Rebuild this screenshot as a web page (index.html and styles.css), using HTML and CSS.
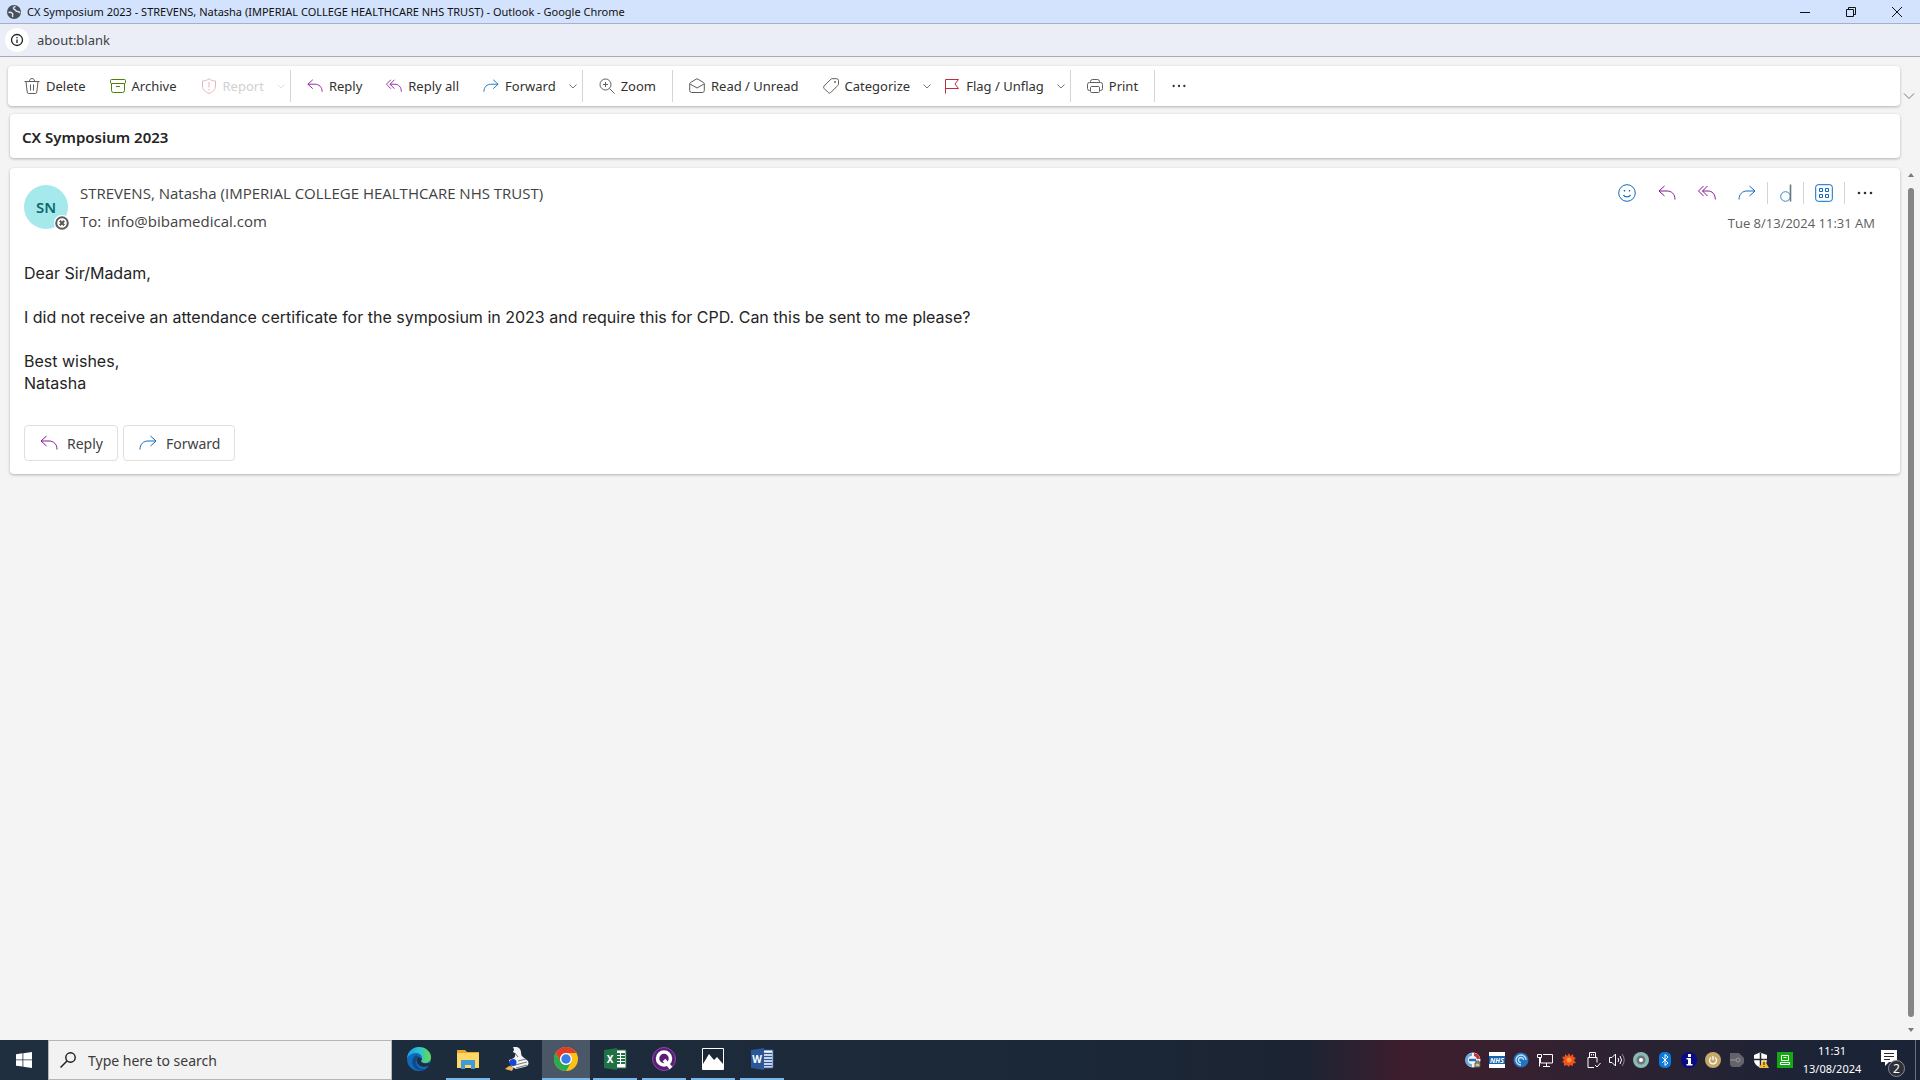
FILE: index.html
```html
<!DOCTYPE html>
<html lang="en">
<head>
    <meta charset="UTF-8">
    <meta name="viewport" content="width=device-width, initial-scale=1.0">
    <title>CX Symposium 2023 - Outlook</title>
    <link rel="stylesheet" href="styles.css">
</head>
<body>
    <!-- Shared icons -->
    <svg class="sprite" aria-hidden="true">
        <symbol id="reply" viewBox="0 0 18 18"><path d="M6.500 2 1 7l5.500 5M1 7H9c4.500 0 8 3 8 8.500"/></symbol>
        <symbol id="reply-all" viewBox="0 0 18 18"><path d="M5.500 2 .500 7l5 5M9.500 2l-5 5 5 5M4.500 7h5.500c4 0 7.300 3 7.300 8.500"/></symbol>
        <symbol id="forward" viewBox="0 0 18 18"><path d="m11.500 2 5.500 5-5.500 5M17 7H9C4.500 7 1 10 1 15.500"/></symbol>
        <symbol id="caret" viewBox="0 0 8 8"><path d="m.500 2.500 3.500 3.500 3.500-3.500"/></symbol>
        <symbol id="more" viewBox="0 0 18 18"><circle cx="3" cy="9" r="1.300"/><circle cx="9" cy="9" r="1.300"/><circle cx="15" cy="9" r="1.300"/></symbol>
    </svg>

    <header class="titlebar">
        <svg class="globe" viewBox="0 0 14 14"><circle cx="7" cy="7" r="7" fill="#4b5058"/><path d="M1.500 7.500c2-.500 3 0 4 1s-1 2 .500 3.500M8.500 1.500C6 2 6 4 7.500 4.500s1 2 3 2 2 1 2.500 1.500" fill="none" stroke="#d3e3fd" stroke-width="1.500"/></svg>
        <h1 class="window-title">CX Symposium 2023 - STREVENS, Natasha (IMPERIAL COLLEGE HEALTHCARE NHS TRUST) - Outlook - Google Chrome</h1>
        <div class="window-buttons">
            <button type="button" aria-label="Minimize"><svg viewBox="0 0 12 12"><path d="M1 6.500h10"/></svg></button>
            <button type="button" aria-label="Restore"><svg viewBox="0 0 12 12"><path d="M1.500 3.500h7v7h-7zM3.500 3.500v-2h7v7h-2"/></svg></button>
            <button type="button" aria-label="Close"><svg viewBox="0 0 12 12"><path d="m1 1 10 10M11 1 1 11"/></svg></button>
        </div>
    </header>

    <div class="addressbar">
        <button type="button" class="site-info" aria-label="View site information"><svg viewBox="0 0 14 14"><circle cx="7" cy="7" r="5.500"/><path d="M7 6.500V10M7 4v1.200"/></svg></button>
        <input class="address" type="text" value="about:blank" aria-label="Address" readonly>
    </div>

    <main class="mail">
        <div class="toolbar-row">
            <nav class="toolbar card">
                <button type="button" class="tool"><svg class="icon" viewBox="0 0 16 16"><path d="M.500 3.500h15M5.500 3.300C5.500 1.500 6.500.500 8 .500s2.500 1 2.500 2.800M2 3.500l1.200 10.500q.200 1.500 1.600 1.500h6.400q1.400 0 1.600-1.500L14 3.500M6.500 6.500v6M9.500 6.500v6"/></svg>Delete</button>
                <button type="button" class="tool green"><svg class="icon" viewBox="0 0 16 16"><path d="M1.500 1.500h13q1 0 1 1v2q0 1-1 1h-13q-1 0-1-1v-2q0-1 1-1zM1.500 5.500v7q0 2 2 2h9q2 0 2-2v-7M6 8.500h4"/></svg>Archive</button>
                <button type="button" class="tool disabled" disabled><svg class="icon" viewBox="0 0 16 16"><path d="M8 .800C6 2.300 4 2.800 1.500 3v5c0 3.500 2.500 6 6.500 7.500 4-1.500 6.500-4 6.500-7.500V3C12 2.800 10 2.300 8 .800zM8 4v5.500M8 11v1.500"/></svg>Report</button>
                <button type="button" class="caret disabled" disabled aria-label="Report options"><svg><use href="#caret"/></svg></button>
                <span class="divider"></span>
                <button type="button" class="tool purple"><svg class="icon"><use href="#reply"/></svg>Reply</button>
                <button type="button" class="tool purple"><svg class="icon"><use href="#reply-all"/></svg>Reply all</button>
                <button type="button" class="tool blue"><svg class="icon"><use href="#forward"/></svg>Forward</button>
                <button type="button" class="caret" aria-label="Forward options"><svg><use href="#caret"/></svg></button>
                <span class="divider"></span>
                <button type="button" class="tool"><svg class="icon" viewBox="0 0 16 16"><circle cx="6.500" cy="6.500" r="5.500"/><path d="m10.500 10.500 5 5M6.500 4v5M4 6.500h5"/></svg>Zoom</button>
                <span class="divider"></span>
                <button type="button" class="tool"><svg class="icon" viewBox="0 0 16 16"><path d="M.700 6q0-1 .800-1.500L8 .700l6.500 3.800q.800.500.800 1.500v6.500q0 2-2 2H2.700q-2 0-2-2zM1 6l7 4 7-4"/></svg>Read / Unread</button>
                <button type="button" class="tool"><svg class="icon" viewBox="0 0 16 16"><path d="M9 .700h4.500q2 0 2 2V6q0 .800-.600 1.400l-7.200 7.200q-1.200 1.200-2.400 0L1 10.300q-1-1.100 0-2.200l7-7Q8.400.700 9 .700z"/><circle cx="12" cy="4" r=".600"/></svg>Categorize</button>
                <button type="button" class="caret" aria-label="Categorize options"><svg><use href="#caret"/></svg></button>
                <button type="button" class="tool red"><svg class="icon" viewBox="0 0 16 16"><path d="M1.500 15.500v-14h13l-3.500 4.500 3.500 4.500h-13"/></svg>Flag / Unflag</button>
                <button type="button" class="caret" aria-label="Flag options"><svg><use href="#caret"/></svg></button>
                <span class="divider"></span>
                <button type="button" class="tool"><svg class="icon" viewBox="0 0 16 16"><path d="M3.500 4.500v-1q0-2 2-2h5q2 0 2 2v1M3.500 12.500h-1q-2 0-2-2v-4q0-2 2-2h11q2 0 2 2v4q0 2-2 2h-1M4.500 8.500h7q1 0 1 1v4q0 1-1 1h-7q-1 0-1-1v-4q0-1 1-1z"/></svg>Print</button>
                <span class="divider"></span>
                <button type="button" class="tool more" aria-label="More options"><svg class="icon"><use href="#more"/></svg></button>
            </nav>
            <button type="button" class="expand" aria-label="Ribbon display options"><svg viewBox="0 0 12 8"><path d="m1 1.500 5 5 5-5"/></svg></button>
        </div>

        <h2 class="subject card">CX Symposium 2023</h2>

        <div class="reading-row">
            <article class="message card">
                <div class="message-header">
                    <div class="avatar">SN<svg class="presence" viewBox="0 0 16 16"><circle cx="8" cy="8" r="8" fill="#fff"/><circle cx="8" cy="8" r="5.800" fill="#fff" stroke="#5d5a58" stroke-width="2"/><path d="m5.800 5.800 4.400 4.400M10.200 5.800l-4.400 4.400" stroke="#5d5a58" stroke-width="2.200"/></svg></div>
                    <div class="people">
                        <div class="sender">STREVENS, Natasha (IMPERIAL COLLEGE HEALTHCARE NHS TRUST)</div>
                        <div class="recipient"><span>To:</span><span>info@bibamedical.com</span></div>
                    </div>
                    <div class="message-side">
                        <div class="actions">
                            <button type="button" class="blue" aria-label="React"><svg viewBox="0 0 18 18"><circle cx="9" cy="9" r="8.300"/><path d="M5.500 11c1.500 2.500 5.500 2.500 7 0M6.500 6v1.500M11.500 6v1.500" stroke-width="1.400"/></svg></button>
                            <button type="button" class="purple" aria-label="Reply"><svg><use href="#reply"/></svg></button>
                            <button type="button" class="purple" aria-label="Reply all"><svg><use href="#reply-all"/></svg></button>
                            <button type="button" class="blue" aria-label="Forward"><svg><use href="#forward"/></svg></button>
                            <span class="divider"></span>
                            <button type="button" class="blue narrow" aria-label="Add-in"><svg viewBox="0 0 18 18"><circle cx="8.500" cy="12.500" r="4.800" stroke="#2b88d8"/><path d="M13.500.500v17" stroke="#69797e" stroke-width="1.600"/></svg></button>
                            <span class="divider"></span>
                            <button type="button" class="blue" aria-label="Apps"><svg viewBox="0 0 18 18"><rect x=".700" y=".700" width="16.600" height="16.600" rx="2.500"/><path d="M4.500 4.500h3v3h-3zM10.500 4.500h3v3h-3zM4.500 10.500h3v3h-3zM10.500 10.500h3v3h-3z"/></svg></button>
                            <span class="divider"></span>
                            <button type="button" class="more" aria-label="More actions"><svg><use href="#more"/></svg></button>
                        </div>
                        <time class="date" datetime="2024-08-13T11:31">Tue 8/13/2024 11:31 AM</time>
                    </div>
                </div>

                <div class="message-body">
                    <p>Dear Sir/Madam,</p>
                    <p>I did not receive an attendance certificate for the symposium in 2023 and require this for CPD. Can this be sent to me please?</p>
                    <p>Best wishes,<br>Natasha</p>
                </div>

                <div class="quick-reply">
                    <button type="button" class="purple"><svg><use href="#reply"/></svg>Reply</button>
                    <button type="button" class="blue"><svg><use href="#forward"/></svg>Forward</button>
                </div>
            </article>

            <div class="scrollbar">
                <svg viewBox="0 0 8 6"><path d="M4 1 7 5H1z"/></svg>
                <span class="thumb"></span>
                <svg viewBox="0 0 8 6"><path d="M1 1h6L4 5z"/></svg>
            </div>
        </div>
    </main>

    <footer class="taskbar">
        <button type="button" class="start" aria-label="Start"><svg viewBox="0 0 16 16"><path d="M0 2.200 6.500 1.300v6.200H0zM7.300 1.200 16 0v7.500H7.300zM0 8.300h6.500v6.300L0 13.700zM7.300 8.300H16V16l-8.700-1.200z" fill="#fff"/></svg></button>
        <label class="search">
            <svg viewBox="0 0 16 16"><circle cx="10.500" cy="5.500" r="4.700"/><path d="M7 9 .500 15.500"/></svg>
            <input type="text" placeholder="Type here to search" aria-label="Type here to search">
        </label>

        <div class="apps">
            <button type="button" class="app" aria-label="Edge"><svg viewBox="0 0 24 24"><defs><linearGradient id="edgeTop" x1="0" x2="1"><stop offset="0" stop-color="#1b9de2"/><stop offset=".5" stop-color="#2cc3d3"/><stop offset="1" stop-color="#66dc4b"/></linearGradient></defs><circle cx="12" cy="12" r="12" fill="#0f6cbd"/><path d="M0 11C1 4 6 0 12 0c7 0 12 5 12 10 0 4-3 6-6 6s-4-1-4-2 1-1 1-3c0-3-3-5-6-5C5 6 2 8 0 11z" fill="url(#edgeTop)"/><path d="M9 8c-4 2-5 8-2 12s8 4 12 2c-5 1-10-2-10-7 0-3 1-4 3-5-1-1-2-2-3-2z" fill="#114a8b"/><path d="M12 10c-2 1-3 3-2 5 1 4 6 6 12 4l2-4c-3 2-10 2-10-1 0-1 1-1 1-2z" fill="#1f2d3d"/></svg></button>
            <button type="button" class="app open" aria-label="File Explorer"><svg viewBox="0 0 24 24"><path d="M1 3h8l2 2h12v16H1z" fill="#e8a92e"/><path d="M1 6h22v15H1z" fill="#ffd767"/><path d="M5 13h14v9h-4v-4H9v4H5z" fill="#3f9cd6"/></svg></button>
            <button type="button" class="app" aria-label="Scanner"><svg viewBox="0 0 24 24"><path d="M8 0q7-1 8 5 0 4 2 5l5 4q2 5-4 6l-8 2-5-3-2-6 5-2q2-3 1-5-2 0-2-2 2 0 0-4z" fill="#f1f3f5"/><path d="m10 18 12-3M11 21l11-3M13 14l8-2M10 6l3 4" fill="none" stroke="#6f7780"/><circle cx="8" cy="15.500" r="3.500" fill="#1746d1"/><path d="m0 22 4-3 5 1-2 4z" fill="#f0b45a"/></svg></button>
            <button type="button" class="app open active" aria-label="Chrome"><svg viewBox="0 0 24 24"><circle cx="12" cy="12" r="12" fill="#fbc116"/><path d="M1.600 6A12 12 0 0 1 22.400 6H12a6 6 0 0 0-5.200 9z" fill="#e33b2e"/><path d="M1.600 6A12 12 0 0 0 12 24l5.200-9a6 6 0 0 1-10.400 0z" fill="#2da94f"/><circle cx="12" cy="12" r="6" fill="#fff"/><circle cx="12" cy="12" r="4.700" fill="#3a7cec"/></svg></button>
            <button type="button" class="app open" aria-label="Excel"><svg viewBox="0 0 24 24"><path d="M12 3h11v18H12z" fill="#fff" stroke="#207245"/><path d="M14 6h3v2h-3zM18 6h4v2h-4zM14 9h3v2h-3zM18 9h4v2h-4zM14 12h3v2h-3zM18 12h4v2h-4zM14 15h3v2h-3zM18 15h4v2h-4z" fill="#207245"/><path d="M1 3 14 1v22L1 21z" fill="#207245"/><text x="7" y="16" class="tile-letter">X</text></svg></button>
            <button type="button" class="app open" aria-label="Q"><svg viewBox="0 0 24 24"><circle cx="12" cy="12" r="11.500" fill="#5b1d78" stroke="#8a4ba6"/><circle cx="12" cy="11.500" r="6.500" fill="none" stroke="#fff" stroke-width="3.500"/><path d="m12 13 7 8" stroke="#fff" stroke-width="3.500"/></svg></button>
            <button type="button" class="app open" aria-label="Photos"><svg viewBox="0 0 24 24"><path d="M1.500 1.500h21v21h-21z" fill="#1c2635" stroke="#fff"/><path d="M2 17 8 7l5 6 3-3 6 7v5H2z" fill="#fff"/></svg></button>
            <button type="button" class="app open" aria-label="Word"><svg viewBox="0 0 24 24"><path d="M12 3h11v18H12z" fill="#fff" stroke="#2b579a"/><path d="M14 6.500h8M14 9.500h8M14 12.500h8M14 15.500h8M14 18.500h8" stroke="#2b579a" stroke-width="1.300"/><path d="M1 3 14 1v22L1 21z" fill="#2b579a"/><text x="7" y="16" class="tile-letter">W</text></svg></button>
        </div>

        <div class="tray">
            <svg viewBox="0 0 16 16"><circle cx="8" cy="8" r="7.500" fill="#f2f6fa"/><path d="M7 1A7 7 0 0 0 7 15v-3a4 4 0 0 1 0-8z" fill="#6fa8d8"/><path d="M9 1a7 7 0 0 1 6 6h-3a4 4 0 0 0-3-3z" fill="#c8303b"/><path d="M4 8h7" stroke="#2474bd" stroke-width="2.500"/><path d="M10 11h5v4h-5zM11 11V9h3v2" fill="#d2c48f" stroke="#555"/></svg>
            <svg viewBox="0 0 16 16"><path d="M0 0h16v16H0z" fill="#fff"/><path d="M0 4h16v8H0z" fill="#1762ae"/><text x="8" y="11" class="nhs">NHS</text></svg>
            <svg viewBox="0 0 16 16"><circle cx="8" cy="8" r="7.500" fill="#2474bd"/><path d="M13 8A5 5 0 1 0 8 13M10.500 8A2.500 2.500 0 1 0 8 10.500" fill="none" stroke="#c6e5fa" stroke-width="1.300"/></svg>
            <svg viewBox="0 0 16 16"><path d="M3.500 6v5h12V2.500H6M9.500 11v3.500M6 14.500h7M.500 2.500h4v3h-4zM2.500 5.500v9" fill="none" stroke="#fff"/></svg>
            <svg viewBox="0 0 16 16"><path d="m8 1 1.500 3L12 2l.500 3L15 6l-2 2 2 3-3 .500V14l-3-1-1 2-2-2-3 1v-3l-2-1 2-2-2-3 3-.500L4 2l2.500 2z" fill="#f0511d"/><circle cx="8" cy="8" r="2.500" fill="#ff9a42"/></svg>
            <svg viewBox="0 0 16 16"><path d="M4.500 5.500V.500h6v5M6.500 2v1.500M8.500 2v1.500M3 5.500h9v5M3 5.500v10h6M10 13l2 2 3.500-4" fill="none" stroke="#fff"/></svg>
            <svg viewBox="0 0 16 16"><path d="M.500 5.500H3L6.500 2v12L3 10.500H.500zM9 6q1.500 2 0 4M11 4q3 4 0 8" fill="none" stroke="#fff"/><path d="M13 2q4.500 6 0 12" fill="none" stroke="#8c8591"/></svg>
            <svg viewBox="0 0 16 16"><circle cx="8" cy="8" r="8" fill="#8cb9b2"/><circle cx="8" cy="8" r="4.500" fill="#6c777b"/><circle cx="8" cy="8" r="2" fill="#fff"/></svg>
            <svg viewBox="0 0 16 16"><rect x="2" width="12" height="16" rx="5" fill="#0a7bdc"/><path d="m5 5 6 6-3 2.500v-11L11 5l-6 6" fill="none" stroke="#fff"/></svg>
            <svg viewBox="0 0 16 16"><circle cx="8" cy="8" r="8" fill="#0a0a86"/><path d="M7 2h3v3H7zM5.500 6H10v6h1.500v1.500h-6V12H7V7.500H5.500z" fill="#fff"/></svg>
            <svg viewBox="0 0 16 16"><circle cx="8" cy="8" r="8" fill="#c6a869"/><path d="M6 5.500a3.500 3.500 0 1 0 4 0M8 4v4" fill="none" stroke="#fff" stroke-width="1.300"/></svg>
            <svg viewBox="0 0 16 16"><path d="M1 1h9l5 5v5l-4 4H3l-2-2z" fill="#64636c"/><path d="M1 8h6" stroke="#999"/><circle cx="9" cy="8" r="2" fill="none" stroke="#999"/></svg>
            <svg viewBox="0 0 16 16"><path d="M7 .500 14 3v5c0 3-3 5.500-7 7.500C3 13.500 1 11 1 8V3z" fill="#fff"/><path d="M7.500 1v14M1 7.500h13" stroke="#242433" stroke-width="1.500"/><path d="m11 7 5 9H6z" fill="#f8bd31"/><path d="M11 10v3M11 14v1" stroke="#222"/></svg>
            <svg viewBox="0 0 16 16"><path d="M0 0h16v16H0z" fill="#14a814"/><path d="M4.500 3.500h7v5h-7zM3.500 12.500h9v-2h-9zM6.500 5.500h3" fill="none" stroke="#fff"/></svg>
        </div>
        <div class="clock"><span>11:31</span><span>13/08/2024</span></div>
        <button type="button" class="notifications" aria-label="Notifications"><svg viewBox="0 0 16 16"><path d="M0 0h16v12H8l-4 4v-4H0z" fill="#fff"/><path d="M3 3.500h10M3 6.500h10M3 9.500h6" stroke="#242735"/></svg><span class="count">2</span></button>
        <span class="show-desktop"></span>
    </footer>
</body>
</html>
```
FILE: styles.css
```css
* {
    box-sizing: border-box;
}

body {
    font-family: "Noto Sans", "Open Sans", sans-serif;
    font-size: 13px;
    color: #323130;
    background-color: #f4f4f4;
    margin: 0;
    height: 100vh;
    display: flex;
    flex-direction: column;
    overflow: hidden;
}

h1, h2, p {
    margin: 0;
}

button {
    font: inherit;
    color: inherit;
    background: none;
    border: none;
    padding: 0;
    display: flex;
    align-items: center;
    justify-content: center;
    flex: none;
}

input {
    font: inherit;
    color: inherit;
    background: none;
    border: none;
    padding: 0;
    outline: none;
}

svg {
    display: block;
    flex: none;
}

.sprite {
    display: none;
}

/* Browser window */
.titlebar {
    display: flex;
    align-items: center;
    height: 24px;
    padding-left: 7px;
    background-color: #d3e3fd;
    border-bottom: 1px solid #a9b0c3;
    flex: none;
}

.globe {
    width: 14px;
    height: 14px;
}

.window-title {
    font-size: 11px;
    font-weight: normal;
    color: #111111;
    margin-left: 6px;
    flex: 1;
}

.window-buttons {
    display: flex;
}

.window-buttons button {
    width: 46px;
    height: 22px;
}

.window-buttons svg {
    width: 12px;
    height: 12px;
    fill: none;
    stroke: #111111;
}

.addressbar {
    display: flex;
    align-items: center;
    height: 33px;
    padding-left: 5px;
    background-color: #ebeef7;
    border-bottom: 1px solid #a9abb8;
    flex: none;
}

.site-info {
    width: 24px;
    height: 24px;
    border-radius: 50%;
    background-color: #ffffff;
}

.site-info svg {
    width: 14px;
    height: 14px;
    fill: none;
    stroke: #202124;
    stroke-width: 1.3;
}

.address {
    margin-left: 8px;
    flex: 1;
    color: #3c3f43;
}

/* Outlook */
.mail {
    flex: 1;
    min-height: 0;
    display: flex;
    flex-direction: column;
    padding: 9px 0 0 8px;
}

.card {
    background-color: #ffffff;
    border-radius: 4px;
    box-shadow: 0 1px 3px rgba(0, 0, 0, 0.28);
}

.toolbar-row {
    display: flex;
    align-items: center;
}

.toolbar {
    flex: 1;
    display: flex;
    align-items: center;
    height: 40px;
    padding-left: 4px;
}

.tool {
    height: 32px;
    padding: 0 12px;
    gap: 6px;
    white-space: nowrap;
}

.icon {
    width: 16px;
    height: 16px;
    fill: none;
    stroke: #605e5c;
}

.purple svg {
    fill: none;
    stroke: #881798;
}

.blue svg {
    fill: none;
    stroke: #0f6cbd;
}

.green svg {
    stroke: #498205;
}

.red svg {
    stroke: #bc2f3c;
}

.disabled {
    color: #d2d0ce;
}

.disabled svg {
    stroke: #e6b5ba;
}

.more svg {
    fill: #323130;
    stroke: none;
}

.caret {
    width: 10px;
    height: 32px;
}

.caret svg {
    width: 8px;
    height: 8px;
    fill: none;
    stroke: #797775;
}

.caret.disabled svg {
    stroke: #e1dfdd;
}

.divider {
    width: 1px;
    height: 32px;
    margin: 0 4px;
    background-color: #d6d4d2;
    flex: none;
}

.expand {
    width: 20px;
    padding-right: 3px;
    margin-top: 20px;
}

.expand svg {
    width: 12px;
    height: 8px;
    fill: none;
    stroke: #797775;
}

.subject {
    height: 44px;
    margin: 8px 20px 0 2px;
    padding-left: 12px;
    font-size: 15px;
    font-weight: 600;
    line-height: 46px;
    color: #242424;
    flex: none;
}

.reading-row {
    flex: 1;
    min-height: 0;
    display: flex;
    align-items: flex-start;
    margin-top: 10px;
    padding-left: 2px;
}

.message {
    flex: 1;
    padding: 8px 14px 13px;
}

.message-header {
    display: flex;
}

.avatar {
    position: relative;
    display: flex;
    align-items: center;
    justify-content: center;
    width: 44px;
    height: 44px;
    margin-top: 9px;
    border-radius: 50%;
    background-color: #a6e9ed;
    color: #0b6a6f;
    font-size: 15px;
    font-weight: 600;
}

.presence {
    position: absolute;
    right: -2px;
    bottom: -2px;
    width: 16px;
    height: 16px;
}

.people {
    flex: 1;
    margin-left: 12px;
    padding-top: 3px;
    font-family: "Open Sans", "Noto Sans", sans-serif;
    font-size: 15px;
    line-height: 28px;
    color: #424242;
}

.recipient {
    display: flex;
    gap: 6px;
}

.message-side {
    display: flex;
    flex-direction: column;
    align-items: flex-end;
}

.actions {
    display: flex;
    align-items: center;
    height: 34px;
    margin-right: 1px;
}

.actions button {
    width: 40px;
    height: 32px;
}

.actions svg {
    width: 18px;
    height: 18px;
}

.actions .narrow {
    width: 35px;
}

.actions .divider {
    height: 22px;
    margin: 0;
}

.date {
    font-family: "Open Sans", "Noto Sans", sans-serif;
    font-size: 13px;
    line-height: 26px;
    margin-right: 11px;
    color: #605e5c;
}

.message-body {
    margin-top: 26px;
    font-family: Inter, "Liberation Sans", sans-serif;
    font-size: 16px;
    line-height: 22px;
    color: #242424;
}

.message-body p + p {
    margin-top: 22px;
}

.quick-reply {
    display: flex;
    gap: 5px;
    margin-top: 31px;
}

.quick-reply button {
    height: 36px;
    padding: 0 14px;
    gap: 8px;
    font-size: 14px;
    color: #424242;
    border: 1px solid #e1dfdd;
    border-radius: 4px;
}

.quick-reply svg {
    width: 20px;
    height: 18px;
}

.scrollbar {
    align-self: stretch;
    width: 20px;
    display: flex;
    flex-direction: column;
    align-items: center;
    gap: 10px;
    padding: 4px 0 7px 2px;
}

.scrollbar svg {
    width: 8px;
    height: 6px;
    fill: #7a7a7a;
}

.thumb {
    flex: 1;
    width: 6px;
    border-radius: 3px;
    background-color: #858585;
}

/* Windows taskbar */
.taskbar {
    display: flex;
    align-items: center;
    height: 40px;
    background: linear-gradient(90deg, #1f2f40 0%, #1b2838 55%, #1c2433 68%, #3c1d2e 73%, #38202f 78%, #2b2233 85%, #1b2436 95%, #1b2436 100%);
    color: #ffffff;
    flex: none;
}

.start {
    width: 48px;
    height: 40px;
}

.start svg {
    width: 16px;
    height: 16px;
}

.search {
    display: flex;
    align-items: center;
    gap: 12px;
    width: 344px;
    height: 40px;
    padding: 0 11px;
    background-color: #f2f2f2;
    border: 1px solid #b5b5b5;
}

.search svg {
    width: 16px;
    height: 16px;
    fill: none;
    stroke: #1a1a1a;
    stroke-width: 1.4;
}

.search input {
    flex: 1;
    font-size: 14px;
}

.search input::placeholder {
    color: #3a3a3a;
}

.apps {
    display: flex;
    gap: 1px;
    margin-left: 3px;
}

.app {
    width: 48px;
    height: 40px;
    border-bottom: 2px solid transparent;
}

.app svg {
    width: 24px;
    height: 24px;
}

.open {
    border-image: linear-gradient(90deg, transparent 8%, #76b9ed 8%, #76b9ed 92%, transparent 92%) 2;
}

.active {
    background-color: #4a5766;
    border-image: none;
    border-bottom-color: #76b9ed;
}

.tile-letter {
    font-size: 10px;
    font-weight: bold;
    fill: #ffffff;
    text-anchor: middle;
}

.tray {
    display: flex;
    gap: 8px;
    margin-left: auto;
}

.tray svg {
    width: 16px;
    height: 16px;
}

.nhs {
    font-size: 7px;
    font-style: italic;
    font-weight: bold;
    fill: #ffffff;
    text-anchor: middle;
}

.clock {
    display: flex;
    flex-direction: column;
    align-items: center;
    width: 78px;
    font-size: 11px;
    line-height: 18px;
}

.notifications {
    position: relative;
    width: 36px;
    height: 40px;
}

.notifications svg {
    width: 16px;
    height: 16px;
    margin-bottom: 4px;
}

.count {
    position: absolute;
    right: 2px;
    bottom: 3px;
    width: 17px;
    height: 17px;
    border: 1px solid #8a8d95;
    border-radius: 50%;
    background-color: #2d3038;
    font-size: 12px;
    line-height: 15px;
}

.show-desktop {
    width: 5px;
    height: 40px;
    margin-left: 8px;
    border-left: 1px solid #6c717c;
}
```
